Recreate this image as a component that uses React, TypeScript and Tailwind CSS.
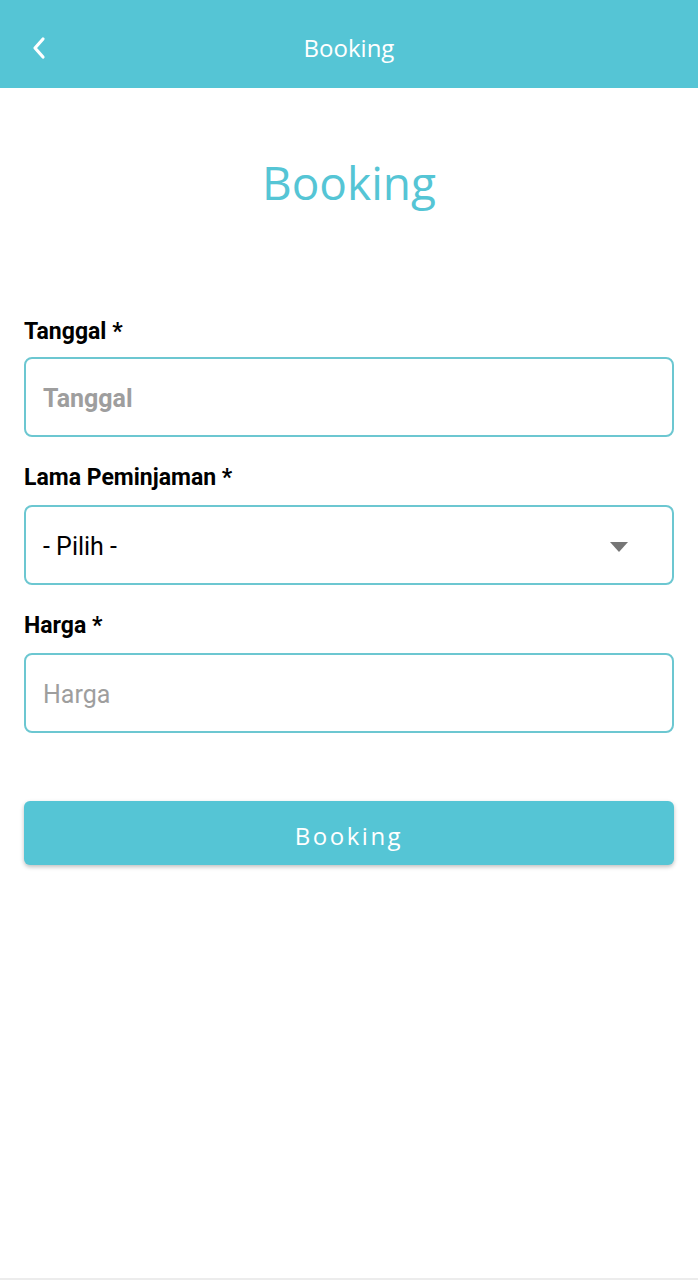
import React from "react";

export default function App() {
  return (
    <div className="w-[698px] h-[1280px] bg-white flex flex-col" style={{ fontFamily: "Roboto, 'Liberation Sans', sans-serif" }}>
      <div className="h-[88px] bg-[#55c5d5] flex items-center relative shrink-0">
        <div className="absolute left-[30px] top-[34px]">
          <svg width="20" height="28" viewBox="0 0 20 28" fill="none">
            <path d="M13 5 L5 14 L13 23" stroke="white" strokeWidth="3.2" strokeLinecap="round" strokeLinejoin="round" />
          </svg>
        </div>
        <div className="w-full text-center text-white text-[24px] pt-[8px]" style={{ fontFamily: "'Open Sans', sans-serif" }}>
          Booking
        </div>
      </div>
      <div className="flex-1 flex flex-col px-[24px]">
        <div className="mt-[64px] text-center text-[#55c5d5] text-[46px] leading-[60px]" style={{ fontFamily: "'Open Sans', sans-serif", fontWeight: 400 }}>
          Booking
        </div>
        <div className="mt-[106px] text-[23px] font-bold text-black leading-[28px]">Tanggal *</div>
        <div className="mt-[11px] h-[80px] border-2 border-[#6cc7d1] rounded-[8px] flex items-center px-[17px]">
          <span className="text-[25px] font-bold text-[#9e9e9e] pt-[3px]">Tanggal</span>
        </div>
        <div className="mt-[27px] text-[23px] font-bold text-black leading-[28px]">Lama Peminjaman *</div>
        <div className="mt-[13px] h-[80px] border-2 border-[#6cc7d1] rounded-[8px] flex items-center px-[17px]">
          <span className="text-[25px] text-black flex-1 pt-[3px]">- Pilih -</span>
          <svg width="20" height="12" viewBox="0 0 20 12" className="mr-[26px] mt-[4px]">
            <path d="M1 1 L19 1 L10 11 Z" fill="#767676" />
          </svg>
        </div>
        <div className="mt-[27px] text-[23px] font-bold text-black leading-[28px]">Harga *</div>
        <div className="mt-[13px] h-[80px] border-2 border-[#6cc7d1] rounded-[8px] flex items-center px-[17px]">
          <span className="text-[25px] text-[#9e9e9e] pt-[3px]">Harga</span>
        </div>
        <div className="mt-[68px] h-[64px] bg-[#55c5d5] rounded-[6px] shadow-[0_2px_4px_rgba(0,0,0,0.25)] flex items-center justify-center">
          <span className="text-white text-[24px] tracking-[2.5px] pt-[5px]" style={{ fontFamily: "'Open Sans', sans-serif" }}>Booking</span>
        </div>
      </div>
      <div className="h-[2px] bg-[#ececec] shrink-0" />
    </div>
  );
}
